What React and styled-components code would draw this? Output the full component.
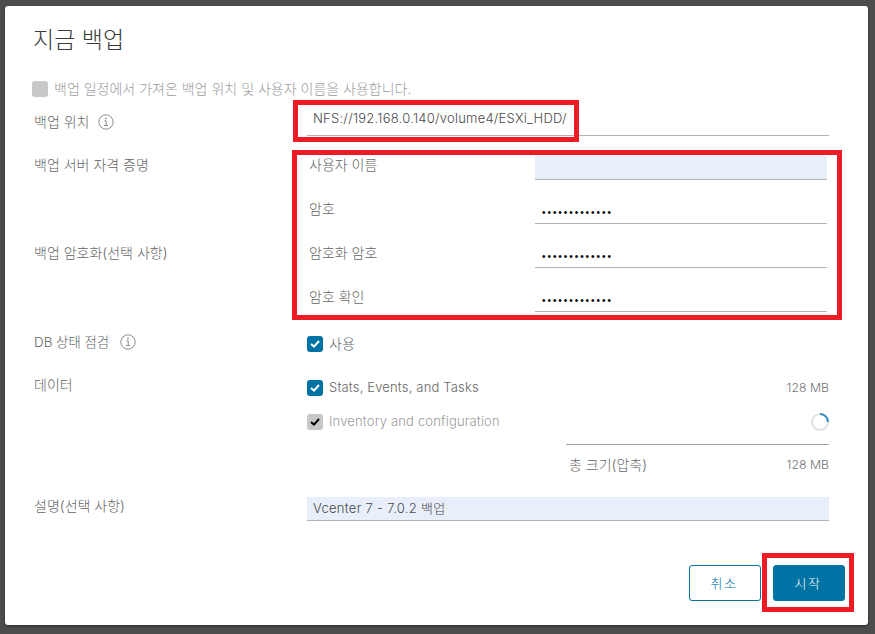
import styled, { createGlobalStyle } from 'styled-components';

const GlobalStyle = createGlobalStyle`
  html, body {
    margin: 0;
    padding: 0;
    height: 100%;
    background: #4d4d4d;
    overflow: hidden;
  }
  body {
    font-family: "Inter", "Noto Sans CJK KR", sans-serif;
    font-size: 14px;
    font-weight: 300;
    color: #666;
  }
`;

const Dialog = styled.div`
  position: relative;
  box-sizing: border-box;
  width: 863px;
  height: 619px;
  margin: 6px 0 0 5px;
  padding: 0 39px 0 29px;
  background: #fff;
  border-radius: 3px;
  box-shadow: 0 1px 3px rgba(0, 0, 0, 0.4);
  display: flex;
  flex-direction: column;
`;

const Title = styled.h1`
  margin: 0 0 0 -1px;
  height: 75px;
  padding-top: 19px;
  box-sizing: border-box;
  font-size: 23px;
  line-height: 30px;
  font-weight: 300;
  color: #3a3a3a;
`;

const Row = styled.div`
  display: grid;
  grid-template-columns: 273px 1fr;
  height: ${p => p.$height}px;
  margin-top: ${p => p.$top || 0}px;
`;

const Label = styled.div`
  display: flex;
  align-items: center;
  gap: ${p => p.$gap || 11}px;
  height: 20px;
  line-height: 20px;
  margin-top: ${p => p.$top || 0}px;
  font-size: ${p => p.$size || 14}px;
`;

const Box = styled.span`
  flex: none;
  width: 16px;
  height: 16px;
  border-radius: 3px;
  background: ${p => (p.$disabled ? '#c8c8c8' : '#0072a3')};
  display: flex;
  align-items: center;
  justify-content: center;
`;

const CheckLine = styled.label`
  display: flex;
  align-items: center;
  gap: 6px;
  height: 16px;
  margin-left: ${p => p.$left || 0}px;
  color: ${p => (p.$disabled ? '#9c9c9c' : '#666')};
`;

const CheckText = styled.span`
  margin-bottom: ${p => (p.$latin ? 2 : 3)}px;
  font-size: ${p => (p.$latin ? 13 : 14)}px;
  letter-spacing: ${p => (p.$latin ? 0.17 : 0)}px;
`;

const Field = styled.div`
  box-sizing: border-box;
  height: ${p => p.$height || 24}px;
  line-height: 22px;
  padding-left: 6px;
  border-bottom: 1px solid #b3b3b3;
  background: ${p => (p.$filled ? '#e8eefa' : 'transparent')};
  color: #4a4a4a;
  font-size: 13px;
  letter-spacing: ${p => p.$spacing || 0}px;
  align-self: end;
`;

const Dots = styled(Field)`
  padding-left: 7px;
  font-family: "Liberation Sans", sans-serif;
  font-size: 10px;
  letter-spacing: 1.95px;
  color: #000;
  line-height: 26px;
`;

const Credentials = styled.div`
  display: grid;
  grid-template-columns: 275px 226px 292px;
  grid-auto-rows: 44px;
`;

const CredLabel = styled.div`
  align-self: end;
  height: 25px;
  line-height: 20px;
`;

const CredCell = styled.div`
  display: contents;
`;

const DataList = styled.div`
  display: flex;
  flex-direction: column;
`;

const DataRow = styled.div`
  display: flex;
  align-items: center;
  justify-content: space-between;
  height: 16px;
  margin-bottom: 18px;
`;

const Size = styled.span`
  font-size: 12.3px;
  margin-bottom: ${p => p.$up || 0}px;
  color: #747474;
`;

const Spinner = styled.svg`
  width: 18px;
  height: 18px;
`;

const Total = styled.div`
  display: flex;
  justify-content: space-between;
  align-items: center;
  box-sizing: border-box;
  height: 38px;
  margin: -4px 0 0 259px;
  padding-left: 3px;
  border-top: 1px solid #a3a3a3;
`;

const Footer = styled.div`
  display: flex;
  justify-content: flex-end;
  gap: 12px;
  margin: 44px -16px 0 0;
`;

const Button = styled.button`
  box-sizing: border-box;
  width: 72px;
  height: 36px;
  border-radius: 3px;
  border: 1px solid #0072a3;
  background: ${p => (p.$primary ? '#0072a3' : '#fff')};
  color: ${p => (p.$primary ? '#fff' : '#0072a3')};
  font: inherit;
  font-size: 13px;
  letter-spacing: 1.5px;
  padding: 0 2px 2px 0;
`;

const Mark = styled.div`
  position: absolute;
  box-sizing: border-box;
  border: 5px solid #ed1c24;
  left: ${p => p.$x - 5}px;
  top: ${p => p.$y - 6}px;
  width: ${p => p.$w}px;
  height: ${p => p.$h}px;
  pointer-events: none;
`;

const Info = () => (
  <svg width="16" height="16" viewBox="0 0 16 16" fill="none" stroke="#8c8c8c">
    <circle cx="8" cy="8" r="7.2" />
    <path d="M6.4 6.8h1.8v4.6M6 11.5h4" />
    <circle cx="8" cy="4.4" r="0.9" fill="#8c8c8c" stroke="none" />
  </svg>
);

const Check = ({ color = '#fff' }) => (
  <svg width="10" height="8" viewBox="0 0 10 8" fill="none" stroke={color} strokeWidth="2">
    <path d="M1 4l3 2.6L9 1" />
  </svg>
);

const creds = [
  { side: '백업 서버 자격 증명', label: '사용자 이름', filled: true },
  { label: '암호', dots: true },
  { side: '백업 암호화(선택 사항)', label: '암호화 암호', dots: true },
  { label: '암호 확인', dots: true },
];

export default function App() {
  return (
    <>
      <GlobalStyle />
      <Dialog>
        <Title>지금 백업</Title>
        <CheckLine $disabled $left={-2}>
          <Box $disabled />
          <CheckText>백업 일정에서 가져온 백업 위치 및 사용자 이름을 사용합니다.</CheckText>
        </CheckLine>
        <Row $height={29} $top={10}>
          <Label $top={5} $gap={9}>백업 위치 <Info /></Label>
          <Field $height={29} $spacing={0.24}>NFS://192.168.0.140/volume4/ESXi_HDD/</Field>
        </Row>
        <Credentials>
          {creds.map(c => (
            <CredCell key={c.label}>
              <CredLabel>{c.side}</CredLabel>
              <CredLabel>{c.label}</CredLabel>
              {c.dots
                ? <Dots>•••••••••••••</Dots>
                : <Field $filled={c.filled} />}
            </CredCell>
          ))}
        </Credentials>
        <Row $height={16} $top={24}>
          <Label $top={-4} $size={13.4}>DB 상태 점검 <Info /></Label>
          <CheckLine><Box><Check /></Box><CheckText>사용</CheckText></CheckLine>
        </Row>
        <Row $height={106} $top={28}>
          <Label $top={-5}>데이터</Label>
          <DataList>
            <DataRow>
              <CheckLine><Box><Check /></Box><CheckText $latin>Stats, Events, and Tasks</CheckText></CheckLine>
              <Size $up={2}>128 MB</Size>
            </DataRow>
            <DataRow>
              <CheckLine $disabled><Box $disabled><Check color="#000" /></Box><CheckText $latin>Inventory and configuration</CheckText></CheckLine>
              <Spinner viewBox="0 0 18 18" fill="none" strokeWidth="2">
                <circle cx="9" cy="9" r="8" stroke="#e3e3e3" />
                <path d="M9 1a8 8 0 0 1 8 8" stroke="#2f8fbe" />
              </Spinner>
            </DataRow>
            <Total>
              <span>총 크기(압축)</span>
              <Size $up={-2}>128 MB</Size>
            </Total>
          </DataList>
        </Row>
        <Row $height={24} $top={11}>
          <Label $top={-1}>설명(선택 사항)</Label>
          <Field $filled $spacing={0.3}>Vcenter 7 - 7.0.2 백업</Field>
        </Row>
        <Footer>
          <Button>취소</Button>
          <Button $primary>시작</Button>
        </Footer>
        <Mark $x={293} $y={100} $w={286} $h={42} />
        <Mark $x={292} $y={150} $w={550} $h={170} />
        <Mark $x={762} $y={553} $w={92} $h={59} />
      </Dialog>
    </>
  );
}
